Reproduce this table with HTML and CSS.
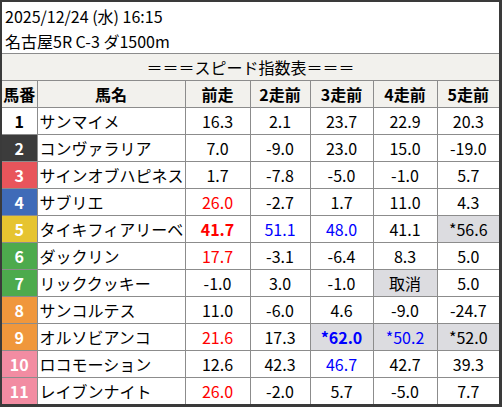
FILE: index.html
```html
<!DOCTYPE html>
<html lang="ja">
<head>
<meta charset="utf-8">
<link rel="stylesheet" href="styles.css">
</head>
<body>
<div class="frame">
  <div class="title">
    <div>2025/12/24 (水) 16:15</div>
    <div>名古屋5R C-3 ダ1500m</div>
  </div>
  <table class="grid">
    <colgroup>
      <col class="c-no"><col class="c-name"><col class="c-1"><col class="c-2"><col class="c-3"><col class="c-4"><col class="c-5">
    </colgroup>
    <thead>
      <tr><th colspan="7" class="caption">＝＝＝スピード指数表＝＝＝</th></tr>
      <tr><th>馬番</th><th>馬名</th><th>前走</th><th>2走前</th><th>3走前</th><th>4走前</th><th>5走前</th></tr>
    </thead>
    <tbody>
      <tr><td class="no w1">1</td><td class="name">サンマイメ</td><td>16.3</td><td>2.1</td><td>23.7</td><td>22.9</td><td>20.3</td></tr>
      <tr><td class="no w2">2</td><td class="name">コンヴァラリア</td><td>7.0</td><td>-9.0</td><td>23.0</td><td>15.0</td><td>-19.0</td></tr>
      <tr><td class="no w3">3</td><td class="name">サインオブハピネス</td><td>1.7</td><td>-7.8</td><td>-5.0</td><td>-1.0</td><td>5.7</td></tr>
      <tr><td class="no w4">4</td><td class="name">サブリエ</td><td class="red">26.0</td><td>-2.7</td><td>1.7</td><td>11.0</td><td>4.3</td></tr>
      <tr><td class="no w5">5</td><td class="name">タイキフィアリーベ</td><td class="red bold">41.7</td><td class="blue">51.1</td><td class="blue">48.0</td><td>41.1</td><td class="gray">*56.6</td></tr>
      <tr><td class="no w6">6</td><td class="name">ダックリン</td><td class="red">17.7</td><td>-3.1</td><td>-6.4</td><td>8.3</td><td>5.0</td></tr>
      <tr><td class="no w6">7</td><td class="name">リッククッキー</td><td>-1.0</td><td>3.0</td><td>-1.0</td><td class="gray">取消</td><td>5.0</td></tr>
      <tr><td class="no w8">8</td><td class="name">サンコルテス</td><td>11.0</td><td>-6.0</td><td>4.6</td><td>-9.0</td><td>-24.7</td></tr>
      <tr><td class="no w8">9</td><td class="name">オルソビアンコ</td><td class="red">21.6</td><td>17.3</td><td class="gray blue bold">*62.0</td><td class="gray blue">*50.2</td><td class="gray">*52.0</td></tr>
      <tr><td class="no w10">10</td><td class="name">ロコモーション</td><td>12.6</td><td>42.3</td><td class="blue">46.7</td><td>42.7</td><td>39.3</td></tr>
      <tr><td class="no w10">11</td><td class="name">レイブンナイト</td><td class="red">26.0</td><td>-2.0</td><td>5.7</td><td>-5.0</td><td>7.7</td></tr>
    </tbody>
  </table>
</div>
</body>
</html>
```

FILE: styles.css
```css
html, body {
  margin: 0;
  padding: 0;
  background: #ffffff;
}
body {
  font-family: "Noto Sans CJK JP", "Noto Sans", sans-serif;
  color: #000;
}
.frame {
  width: 497px;
  height: 402px;
  border-style: solid;
  border-color: #3a3a3a;
  border-width: 2px 3px 3px 2px;
  overflow: hidden;
  background: #fff;
}
.title {
  height: 51px;
  box-sizing: border-box;
  padding: 2px 0 0 3px;
  font-size: 16px;
  line-height: 25px;
}
.grid {
  border-collapse: collapse;
  table-layout: fixed;
  width: 497px;
  font-size: 16px;
}
.c-no { width: 35px; }
.c-name { width: 148px; }
.c-1 { width: 65px; }
.c-2 { width: 60px; }
.c-3 { width: 63px; }
.c-4 { width: 64px; }
.c-5 { width: 62px; }
.grid th, .grid td {
  border: 1px solid #8c8c8c;
  height: 26px;
  padding: 0;
  text-align: center;
  line-height: 20px;
  white-space: nowrap;
  overflow: hidden;
}
.grid tr > :first-child { border-left: none; }
.grid tr > :last-child { border-right: none; }
.grid tbody tr:last-child td { border-bottom: none; }
.grid th {
  background: #f2f1ed;
  font-weight: bold;
}
.grid th.caption {
  font-weight: normal;
  border-top: 1px solid #8c8c8c;
}
.grid td.name {
  text-align: left;
  padding-left: 2px;
}
.no {
  font-weight: bold;
  color: #fff;
}
.w1 { background: #ffffff; color: #000; }
.w2 { background: #3c3c3c; }
.w3 { background: #e8555b; }
.w4 { background: #3f6bb8; }
.w5 { background: #e6c430; }
.w6 { background: #4daa4d; }
.w8 { background: #f0973c; }
.w10 { background: #f28ca2; }
.red { color: #ff0000; }
.blue { color: #0000ff; }
.bold { font-weight: bold; }
.grid td.gray { background: #dcdce0; }
```
